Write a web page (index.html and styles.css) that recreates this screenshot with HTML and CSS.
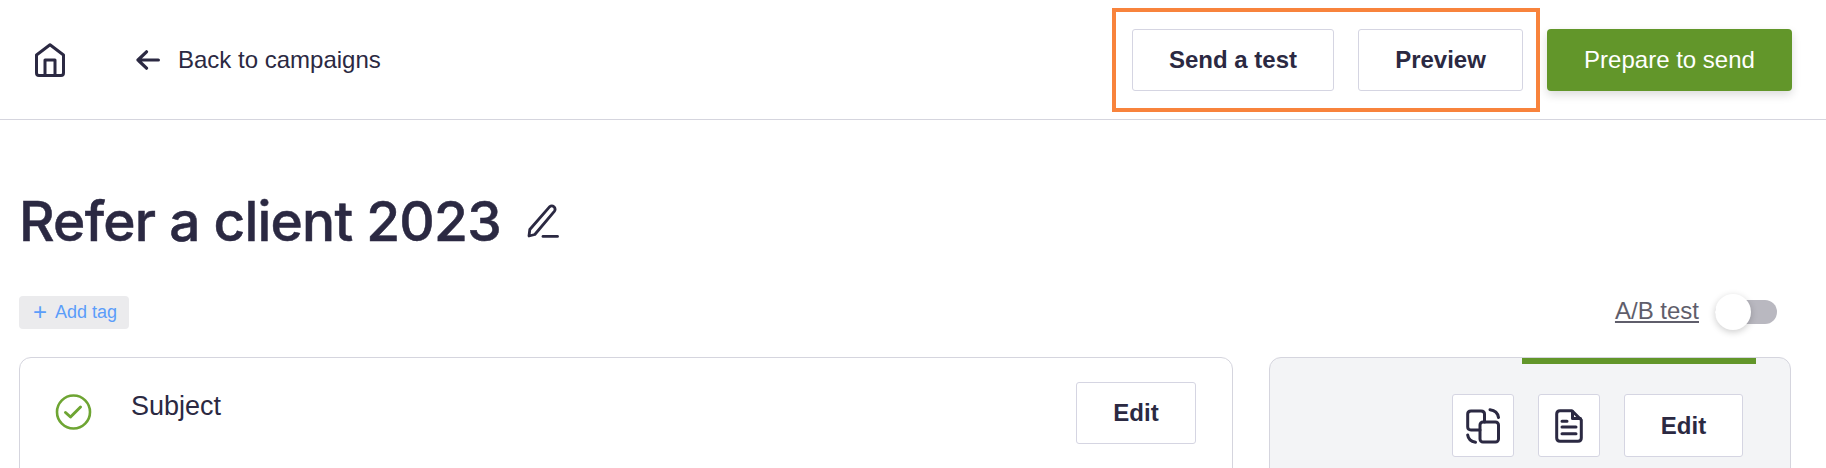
FILE: index.html
```html
<html>
  <head>
    <link rel="stylesheet" href="styles.css">
  </head>
  <body>
    <div id="topbar">
      <a class="home">
        <svg width="30" height="34" viewBox="0 0 30 34" fill="none" stroke="#2b2942" stroke-width="3" stroke-linejoin="round" stroke-linecap="round">
          <path d="M15 1.8 L28.5 12 V30 Q28.5 32.4 26 32.4 H4 Q1.5 32.4 1.5 30 V12 Z"/>
          <path d="M10 32.4 V17 H20 V32.4"/>
        </svg>
      </a>
      <a class="back">
        <svg width="24" height="20" viewBox="0 0 24 20" fill="none" stroke="#2b2942" stroke-width="3.2" stroke-linecap="round" stroke-linejoin="round">
          <path d="M22.4 10 H2 M10.5 1.8 L2 10 L10.5 18.2"/>
        </svg>
        <span>Back to campaigns</span>
      </a>
      <div class="actions">
        <div class="highlight">
          <button class="btn send">Send a test</button>
          <button class="btn preview">Preview</button>
        </div>
        <button class="btn-primary">Prepare to send</button>
      </div>
    </div>

    <div id="content">
      <div class="title-row">
        <h1>Refer a client 2023</h1>
        <svg width="32" height="34" viewBox="0 0 32 34" fill="none" stroke="#2b2942" stroke-width="2.8" stroke-linecap="round" stroke-linejoin="round">
          <path d="M2 32 L2.8 25.5 L22.5 2.8 Q24.8 1 27 2.8 Q29 5 27.3 7.4 L7.8 30.5 Z"/>
          <path d="M16 32.4 H30.5"/>
        </svg>
      </div>
      <div class="tag-row">
        <a class="tag"><span class="plus">+</span> Add tag</a>
        <div class="ab">
          <a>A/B test</a>
          <div class="toggle"><div class="knob"></div></div>
        </div>
      </div>
      <div class="cols">
        <div class="card">
          <svg class="check" width="37" height="36" viewBox="0 0 37 36" fill="none" stroke="#6ea533" stroke-linecap="round" stroke-linejoin="round">
            <circle cx="18.5" cy="18" r="16.5" stroke-width="2.6"/>
            <path d="M10.5 18.5 L15.5 23 L25.5 13" stroke-width="3"/>
          </svg>
          <div class="card-label">Subject</div>
          <button class="btn edit">Edit</button>
        </div>
        <div class="card card-grey">
          <div class="accent"></div>
          <div class="tools">
            <button class="btn icon-btn">
              <svg width="34" height="36" viewBox="0 0 34 36" fill="none" stroke="#2b2942" stroke-width="3" stroke-linecap="round" stroke-linejoin="round">
                <path d="M14 22 H5 Q1.7 22 1.7 19 V6 Q1.7 3 5 3 H15 Q18.5 3 18.5 6 V14"/>
                <rect x="14" y="14" width="18.5" height="20" rx="3"/>
                <path d="M24 1.7 Q31.5 2.5 32.5 9.5 M1.7 27 Q2.5 33 9.5 34.3"/>
              </svg>
            </button>
            <button class="btn icon-btn">
              <svg width="28" height="34" viewBox="0 0 28 34" fill="none" stroke="#2b2942" stroke-width="3" stroke-linecap="round" stroke-linejoin="round">
                <path d="M5 1.7 H17 L26.3 11 V29 Q26.3 32.3 23 32.3 H5 Q1.7 32.3 1.7 29 V5 Q1.7 1.7 5 1.7 Z"/>
                <path d="M17.5 2.5 V9.5 H25.5 M7 12.3 H12 M7 18 H21 M7 24.7 H21"/>
              </svg>
            </button>
            <button class="btn edit-sm">Edit</button>
          </div>
        </div>
      </div>
    </div>
  </body>
</html>
```

FILE: styles.css
```css
html, body{
  margin: 0;
  padding: 0;
  height: 100%;
  overflow: hidden;
  background: #fff;
  color: #2b2942;
  font-family: "Liberation Sans", Arial, sans-serif;
}
#topbar{
  display: flex;
  align-items: center;
  height: 119px;
  padding: 0 34px 0 35px;
  border-bottom: 1px solid #d5d5de;
}
.home{
  display: flex;
  margin-right: 71px;
}
.back{
  display: flex;
  align-items: center;
  gap: 18px;
  font-size: 24px;
}
.actions{
  display: flex;
  align-items: center;
  gap: 7px;
  margin-left: auto;
}
.highlight{
  display: flex;
  gap: 24px;
  padding: 17px 13px 17px 16px;
  border: 4px solid #f8833c;
}
button{
  font-family: inherit;
  color: inherit;
  cursor: pointer;
}
.btn{
  display: flex;
  align-items: center;
  justify-content: center;
  padding: 0;
  background: #fff;
  border: 1px solid #d5d5e2;
  border-radius: 3px;
  font-size: 24px;
  font-weight: bold;
}
.send{
  width: 202px;
  height: 62px;
}
.preview{
  width: 165px;
  height: 62px;
}
.btn-primary{
  width: 245px;
  height: 62px;
  background: #62962a;
  color: #fff;
  border: 0;
  border-radius: 4px;
  font-size: 24px;
  box-shadow: 0 4px 10px rgba(0,0,0,0.14);
}
#content{
  padding: 0 35px 0 19px;
}
.title-row{
  display: flex;
  align-items: center;
  gap: 26px;
  margin-top: 67px;
}
h1{
  margin: 0;
  font-family: Inter, sans-serif;
  font-size: 55px;
  font-weight: 500;
  letter-spacing: -0.78px;
  -webkit-text-stroke: 0.5px #2b2942;
  line-height: 68px;
}
.tag-row{
  display: flex;
  align-items: center;
  justify-content: space-between;
  height: 40px;
  margin-top: 37px;
}
.tag{
  display: flex;
  align-items: center;
  gap: 8px;
  height: 33px;
  padding: 0 12px 0 14px;
  background: #ebebed;
  border-radius: 4px;
  color: #5b9dfa;
  font-size: 18px;
}
.plus{
  font-size: 24px;
  line-height: 24px;
}
.ab{
  display: flex;
  align-items: center;
  gap: 16px;
  padding-right: 14px;
  color: #5f5e6b;
  font-size: 24px;
}
.ab a{
  text-decoration: underline;
  margin-bottom: 3px;
}
.toggle{
  width: 62px;
  height: 24px;
  background: #b9b8c0;
  border-radius: 12px;
  display: flex;
  align-items: center;
}
.knob{
  width: 36px;
  height: 36px;
  flex: none;
  background: #fff;
  border-radius: 50%;
  box-shadow: 0 2px 7px rgba(0,0,0,0.2);
}
.cols{
  display: grid;
  grid-template-columns: 1214px 522px;
  gap: 36px;
  margin-top: 25px;
}
.card{
  display: flex;
  align-items: flex-start;
  height: 300px;
  box-sizing: border-box;
  padding: 24px 36px 0 35px;
  border: 1px solid #d5d5de;
  border-radius: 12px;
  background: #fff;
}
.check{
  margin-top: 12px;
}
.card-label{
  margin-left: 39px;
  margin-top: 9px;
  font-size: 27px;
}
.edit{
  width: 120px;
  height: 62px;
  margin-left: auto;
}
.card-grey{
  flex-direction: column;
  padding: 0 47px 0 0;
  background: #f3f4f6;
}
.accent{
  width: 234px;
  height: 6px;
  margin-left: 252px;
  background: #62962a;
}
.tools{
  display: flex;
  gap: 24px;
  margin-top: 30px;
  margin-left: auto;
}
.icon-btn{
  width: 62px;
  height: 63px;
}
.edit-sm{
  width: 119px;
  height: 63px;
}
```
